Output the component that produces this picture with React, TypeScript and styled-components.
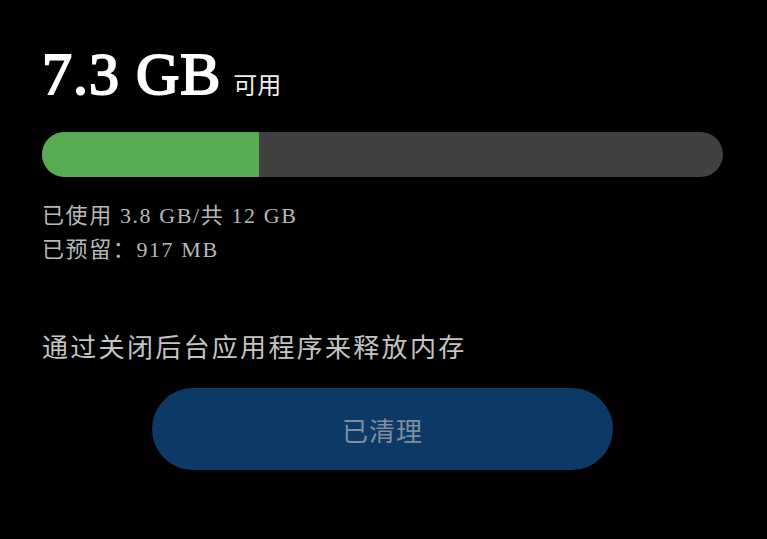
import styled, { createGlobalStyle } from 'styled-components';

const GlobalStyle = createGlobalStyle`
  html, body { margin: 0; padding: 0; background: #000; }
  body { font-family: "Liberation Serif", "Noto Sans CJK SC", serif; }
`

const Page = styled.div`
  width: 767px;
  height: 539px;
  background: #000;
  box-sizing: border-box;
  padding: 40px 44px 0 42px;
  display: flex;
  flex-direction: column;
`
const Headline = styled.div`
  display: flex;
  align-items: baseline;
  gap: 12px;
  color: #fff;
  height: 72px;
`
const BigValue = styled.span`
  font-size: 60px;
  font-weight: 400;
  letter-spacing: 1px;
  -webkit-text-stroke: 2px #fff;
  paint-order: stroke fill;
`
const Unit = styled.span`
  font-family: "Noto Sans CJK SC", sans-serif;
  font-size: 24px;
  color: #eee;
`
const Track = styled.div`
  margin-top: 20px;
  height: 45px;
  border-radius: 23px;
  background: #414141;
  overflow: hidden;
  display: flex;
`
const Fill = styled.div`
  height: 100%;
  background: #57ab52;
`
const Details = styled.div`
  margin-top: 26px;
  display: flex;
  flex-direction: column;
  gap: 8px;
  color: #b8b8b8;
  font-size: 22px;
  letter-spacing: 1.6px;
  line-height: 26px;
  font-family: "Liberation Serif", "Noto Sans CJK SC", serif;
`
const Hint = styled.div`
  margin-top: 65px;
  color: #c4c4c4;
  font-size: 26px;
  letter-spacing: 2.3px;
  font-family: "Noto Sans CJK SC", sans-serif;
  line-height: 36px;
`
const CleanButton = styled.button`
  align-self: flex-start;
  margin: 24px 0 0 110px;
  width: 461px;
  height: 82px;
  border: none;
  border-radius: 41px;
  background: #0c3966;
  color: #7f8e9e;
  font-size: 26px;
  letter-spacing: 1px;
  font-family: "Noto Sans CJK SC", sans-serif;
`

export default function App() {
    const used = 3.8;
    const total = 12;
    return <>
        <GlobalStyle/>
        <Page>
            <Headline>
                <BigValue>7.3 GB</BigValue>
                <Unit>可用</Unit>
            </Headline>
            <Track>
                <Fill style={{width: `${(used / total) * 100 + 0.2}%`}}/>
            </Track>
            <Details>
                <div>已使用 3.8 GB/共 12 GB</div>
                <div>已预留：917 MB</div>
            </Details>
            <Hint>通过关闭后台应用程序来释放内存</Hint>
            <CleanButton>已清理</CleanButton>
        </Page>
    </>
}
